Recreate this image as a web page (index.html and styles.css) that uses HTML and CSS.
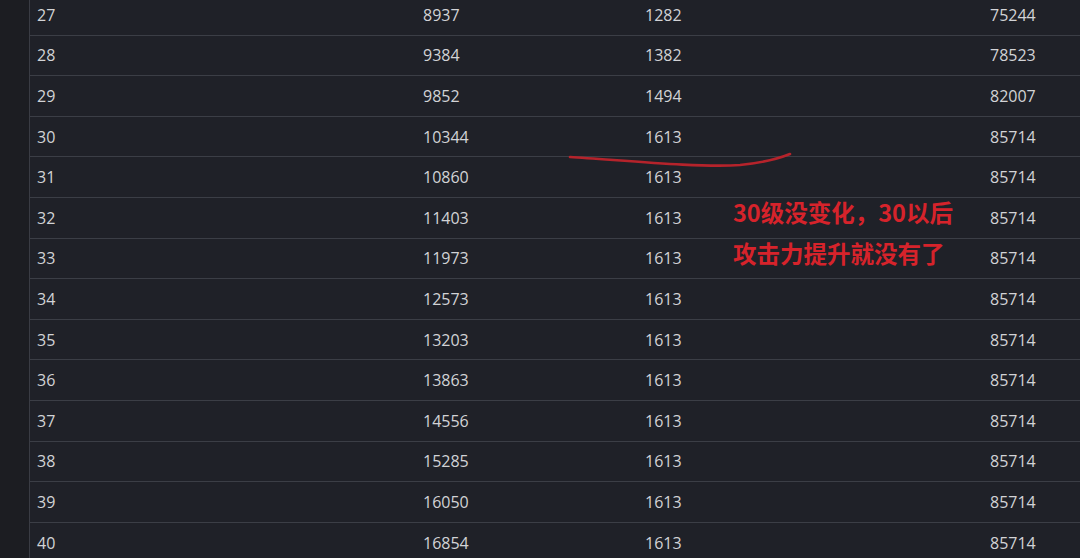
FILE: index.html
```html
<!DOCTYPE html>
<html>
<head>
<meta charset="utf-8">
<link rel="stylesheet" href="styles.css">
</head>
<body>
<div class="page">
  <div class="gutter"></div>
  <div class="table">
    <div class="row"><span>27</span><span>8937</span><span>1282</span><span>75244</span></div>
    <div class="row"><span>28</span><span>9384</span><span>1382</span><span>78523</span></div>
    <div class="row"><span>29</span><span>9852</span><span>1494</span><span>82007</span></div>
    <div class="row"><span>30</span><span>10344</span><span>1613</span><span>85714</span></div>
    <div class="row"><span>31</span><span>10860</span><span>1613</span><span>85714</span></div>
    <div class="row"><span>32</span><span>11403</span><span>1613</span><span>85714</span></div>
    <div class="row"><span>33</span><span>11973</span><span>1613</span><span>85714</span></div>
    <div class="row"><span>34</span><span>12573</span><span>1613</span><span>85714</span></div>
    <div class="row"><span>35</span><span>13203</span><span>1613</span><span>85714</span></div>
    <div class="row"><span>36</span><span>13863</span><span>1613</span><span>85714</span></div>
    <div class="row"><span>37</span><span>14556</span><span>1613</span><span>85714</span></div>
    <div class="row"><span>38</span><span>15285</span><span>1613</span><span>85714</span></div>
    <div class="row"><span>39</span><span>16050</span><span>1613</span><span>85714</span></div>
    <div class="row"><span>40</span><span>16854</span><span>1613</span><span>85714</span></div>
  </div>
</div>
<svg class="underline" width="1080" height="558" viewBox="0 0 1080 558">
  <path d="M570 157 C 620 160 700 168 740 165 C 760 163 780 158 790 154" fill="none" stroke="#b5232b" stroke-width="2.6" stroke-linecap="round"/>
</svg>
<div class="note">
  <div>30级没变化，30以后</div>
  <div>攻击力提升就没有了</div>
</div>
</body>
</html>
```
FILE: styles.css
```css
html, body {
  margin: 0;
  padding: 0;
  background: #1f2128;
  overflow: hidden;
}
body {
  width: 1080px;
  height: 558px;
  position: relative;
  font-family: "Open Sans", "Noto Sans", sans-serif;
}
.page {
  display: flex;
  height: 558px;
}
.gutter {
  width: 29px;
  background: #1c1d22;
  border-right: 1px solid #3a3c44;
  flex-shrink: 0;
}
.table {
  flex: 1;
  margin-top: -5px;
  background: #1f2128;
}
.row {
  display: grid;
  grid-template-columns: 386px 222px 345px 1fr;
  height: 40.6px;
  box-sizing: border-box;
  border-bottom: 1px solid #3b3e46;
  align-items: center;
  color: #d2d3d6;
  font-size: 16px;
}
.row span {
  padding-left: 7px;
  line-height: 20px;
}
.underline {
  position: absolute;
  left: 0;
  top: 0;
  pointer-events: none;
}
.note {
  position: absolute;
  left: 733px;
  top: 192px;
  color: #d6232b;
  font-family: "Noto Sans CJK SC", "Noto Sans", sans-serif;
  font-weight: 700;
  font-size: 23.5px;
  line-height: 41px;
  letter-spacing: 0;
}
```
